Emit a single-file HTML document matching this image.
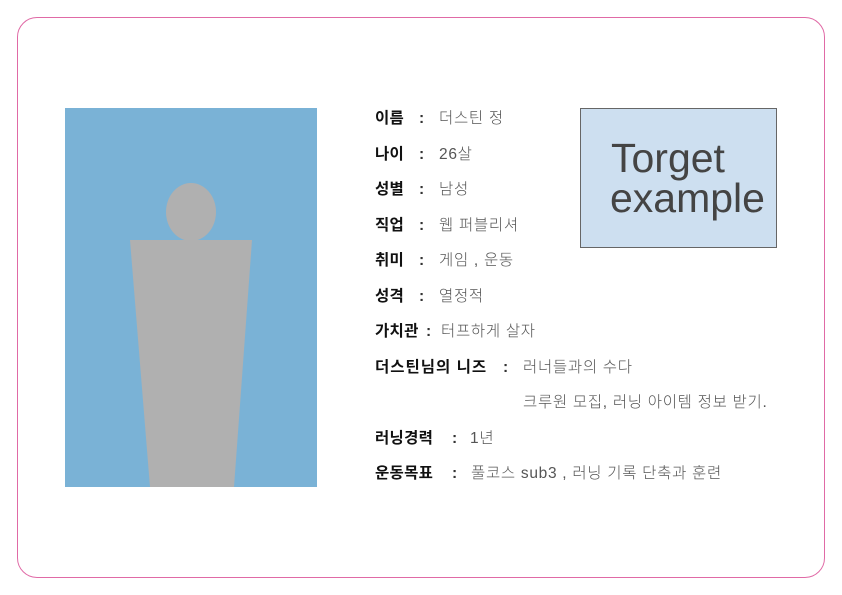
<!DOCTYPE html>
<html><head><meta charset="utf-8"><style>
body{margin:0;width:842px;height:595px;background:#fff;position:relative;overflow:hidden;font-family:"Liberation Sans","Noto Sans CJK KR",sans-serif}
.card{position:absolute;left:17px;top:17px;width:806px;height:559px;border:1px solid #e06aa6;border-radius:20px}
.t{position:absolute;font-size:15.5px;line-height:18px;color:#555;white-space:nowrap;font-weight:300;letter-spacing:0.7px}
.b{color:#111;font-weight:bold;letter-spacing:0.3px}
.c{color:#333;font-weight:bold}
</style></head><body>
<div class="card"></div>
<svg style="position:absolute;left:0;top:0" width="842" height="595">
<rect x="65" y="108" width="252" height="379" fill="#7ab2d6"/>
<ellipse cx="191" cy="212" rx="25" ry="29" fill="#b0b0b0"/>
<polygon points="130,240 252,240 234,487 150,487" fill="#b0b0b0"/>
<rect x="580.5" y="108.5" width="196" height="139" fill="#cddff0" stroke="#666" stroke-width="1"/>
<text x="611" y="172" font-family="Liberation Sans, sans-serif" font-size="41" fill="#444">Torget</text>
<text x="610" y="212" font-family="Liberation Sans, sans-serif" font-size="41" fill="#444">example</text>
</svg>
<div class="t b" style="left:375px;top:110px">이름</div><div class="t c" style="left:419px;top:110px">:</div><div class="t" style="left:439px;top:110px">더스틴 정</div>
<div class="t b" style="left:375px;top:146px">나이</div><div class="t c" style="left:419px;top:146px">:</div><div class="t" style="left:439px;top:146px">26살</div>
<div class="t b" style="left:375px;top:181px">성별</div><div class="t c" style="left:419px;top:181px">:</div><div class="t" style="left:439px;top:181px">남성</div>
<div class="t b" style="left:375px;top:217px">직업</div><div class="t c" style="left:419px;top:217px">:</div><div class="t" style="left:439px;top:217px">웹 퍼블리셔</div>
<div class="t b" style="left:375px;top:252px">취미</div><div class="t c" style="left:419px;top:252px">:</div><div class="t" style="left:439px;top:252px">게임 , 운동</div>
<div class="t b" style="left:375px;top:288px">성격</div><div class="t c" style="left:419px;top:288px">:</div><div class="t" style="left:439px;top:288px">열정적</div>
<div class="t b" style="left:375px;top:323px">가치관</div><div class="t c" style="left:426px;top:323px">:</div><div class="t" style="left:441px;top:323px">터프하게 살자</div>
<div class="t b" style="left:375px;top:359px;letter-spacing:1px">더스틴님의 니즈</div><div class="t c" style="left:503px;top:359px">:</div><div class="t" style="left:523px;top:359px">러너들과의 수다</div>
<div class="t" style="left:523px;top:394px">크루원 모집, 러닝 아이템 정보 받기.</div>
<div class="t b" style="left:375px;top:430px">러닝경력</div><div class="t c" style="left:452px;top:430px">:</div><div class="t" style="left:470px;top:430px">1년</div>
<div class="t b" style="left:375px;top:465px">운동목표</div><div class="t c" style="left:452px;top:465px">:</div><div class="t" style="left:471px;top:465px">풀코스 sub3 , 러닝 기록 단축과 훈련</div>
</body></html>
